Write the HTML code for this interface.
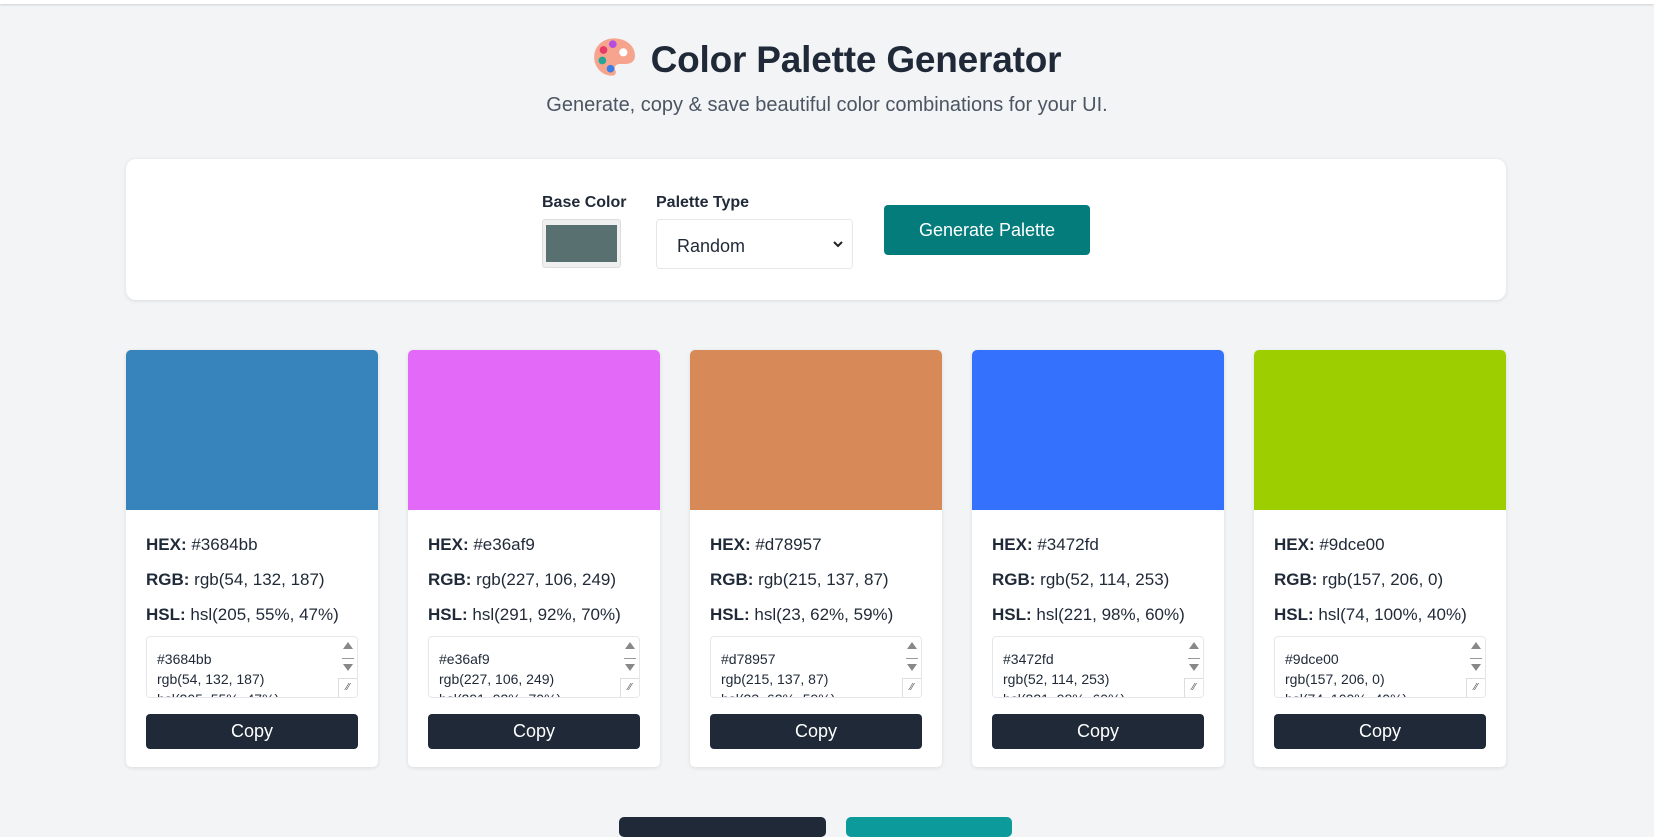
<!DOCTYPE html>
<html><head><meta charset="utf-8">
<style>
*{box-sizing:border-box;margin:0;padding:0}
body{width:1654px;height:821px;overflow:hidden;background:#f3f4f6;font-family:"Liberation Sans",sans-serif;color:#1f2937;position:relative}
.topbar{position:absolute;left:0;top:0;width:1654px;height:4px;background:#fff;box-shadow:0 1px 2px rgba(0,0,0,.15)}
h1{position:absolute;left:0;width:1654px;top:36px;text-align:center;font-size:37px;font-weight:bold;letter-spacing:-0.2px}
.sub{position:absolute;left:0;width:1654px;top:94px;text-align:center;font-size:20px;color:#4b5563}
.panel{position:absolute;left:126px;top:159px;width:1380px;height:141px;background:#fff;border-radius:10px;box-shadow:0 1px 4px rgba(0,0,0,.1)}
.lbl{position:absolute;font-size:16px;font-weight:bold;top:194px}
.cin{position:absolute;left:542px;top:219px;width:79px;height:49px;background:#efefef;border:1px solid #ddd;border-radius:3px}
.cin div{position:absolute;left:3px;top:5px;right:3px;bottom:5px;background:#587170}
.sel{position:absolute;left:656px;top:219px;width:197px;height:50px;border:1px solid #e5e7eb;border-radius:4px;background:#fff;font-size:18px;padding:16px 0 0 20px}
.gen{position:absolute;left:884px;top:205px;width:206px;height:50px;background:#047c7c;color:#fff;border-radius:4px;font-size:18px;text-align:center;line-height:50px}
.card{position:absolute;top:350px;width:252px;height:417px;background:#fff;border-radius:5px;box-shadow:0 1px 4px rgba(0,0,0,.1);overflow:hidden}
.sw{height:160px}
.info{padding:0 20px;font-size:17px}
.info p{height:35px;line-height:35px}
.info p:first-child{margin-top:17px}
.ta{position:relative;margin-top:4px;height:62px;border:1px solid #e5e7eb;border-radius:4px;font-size:14px;line-height:20px;padding:12px 0 0 10px;overflow:hidden;color:#1f2937}
.sb{position:absolute;right:0;top:0;width:18px;height:100%}
.sb .u{position:absolute;left:4px;top:5px;border-left:5px solid transparent;border-right:5px solid transparent;border-bottom:7px solid #888}
.sb .m{position:absolute;left:3px;top:21px;width:12px;height:1px;background:#999}
.sb .d{position:absolute;left:4px;top:27px;border-left:5px solid transparent;border-right:5px solid transparent;border-top:7px solid #888}
.rz{position:absolute;right:0;bottom:0;width:19px;height:19px;border-left:1px solid #ddd;border-top:1px solid #ddd;background:#fff;font-size:10px;color:#555;text-align:center;line-height:18px}
.copy{margin-top:16px;height:35px;background:#1f2937;color:#fff;border-radius:4px;text-align:center;line-height:35px;font-size:18px}
.b1{position:absolute;left:619px;top:817px;width:207px;height:20px;background:#1f2937;border-radius:5px}
.b2{position:absolute;left:846px;top:817px;width:166px;height:20px;background:#0d9a9a;border-radius:5px}
</style></head><body>
<div class="topbar"></div>
<h1><span style="display:inline-block;vertical-align:-6px;margin-right:16px"><svg width="42" height="42" viewBox="0 0 36 36"><path d="M18 2C8 2 1 9 1 18c0 9 7 16 15 16 4 0 4-3 3-5-1-3 1-5 4-5h5c5 0 8-3 8-7C36 8 28 2 18 2z" fill="#f7a48e"/><circle cx="26" cy="14" r="3.5" fill="#fff"/><circle cx="17" cy="7" r="3.3" fill="#b44de0"/><circle cx="9" cy="12" r="3.3" fill="#e83a6a"/><circle cx="8" cy="21" r="3.3" fill="#23a696"/><circle cx="15" cy="28" r="3.3" fill="#3a7de8"/></svg></span>Color Palette Generator</h1>
<div class="sub">Generate, copy &amp; save beautiful color combinations for your UI.</div>
<div class="panel"></div>
<div class="lbl" style="left:542px">Base Color</div>
<div class="lbl" style="left:656px">Palette Type</div>
<div class="cin"><div></div></div>
<div class="sel">Random<svg style="position:absolute;right:8px;top:20px" width="12" height="8" viewBox="0 0 12 8"><path d="M2 2l4 4 4-4" stroke="#222" stroke-width="2" fill="none"/></svg></div>
<div class="gen">Generate Palette</div>

<div class="card" style="left:126px"><div class="sw" style="background:#3684bb"></div><div class="info"><p><b>HEX:</b> #3684bb</p><p><b>RGB:</b> rgb(54, 132, 187)</p><p><b>HSL:</b> hsl(205, 55%, 47%)</p><div class="ta">#3684bb<br>rgb(54, 132, 187)<br>hsl(205, 55%, 47%)<div class="sb"><div class="u"></div><div class="m"></div><div class="d"></div></div><div class="rz">⁄⁄</div></div><div class="copy">Copy</div></div></div>
<div class="card" style="left:408px"><div class="sw" style="background:#e36af9"></div><div class="info"><p><b>HEX:</b> #e36af9</p><p><b>RGB:</b> rgb(227, 106, 249)</p><p><b>HSL:</b> hsl(291, 92%, 70%)</p><div class="ta">#e36af9<br>rgb(227, 106, 249)<br>hsl(291, 92%, 70%)<div class="sb"><div class="u"></div><div class="m"></div><div class="d"></div></div><div class="rz">⁄⁄</div></div><div class="copy">Copy</div></div></div>
<div class="card" style="left:690px"><div class="sw" style="background:#d78957"></div><div class="info"><p><b>HEX:</b> #d78957</p><p><b>RGB:</b> rgb(215, 137, 87)</p><p><b>HSL:</b> hsl(23, 62%, 59%)</p><div class="ta">#d78957<br>rgb(215, 137, 87)<br>hsl(23, 62%, 59%)<div class="sb"><div class="u"></div><div class="m"></div><div class="d"></div></div><div class="rz">⁄⁄</div></div><div class="copy">Copy</div></div></div>
<div class="card" style="left:972px"><div class="sw" style="background:#3472fd"></div><div class="info"><p><b>HEX:</b> #3472fd</p><p><b>RGB:</b> rgb(52, 114, 253)</p><p><b>HSL:</b> hsl(221, 98%, 60%)</p><div class="ta">#3472fd<br>rgb(52, 114, 253)<br>hsl(221, 98%, 60%)<div class="sb"><div class="u"></div><div class="m"></div><div class="d"></div></div><div class="rz">⁄⁄</div></div><div class="copy">Copy</div></div></div>
<div class="card" style="left:1254px"><div class="sw" style="background:#9dce00"></div><div class="info"><p><b>HEX:</b> #9dce00</p><p><b>RGB:</b> rgb(157, 206, 0)</p><p><b>HSL:</b> hsl(74, 100%, 40%)</p><div class="ta">#9dce00<br>rgb(157, 206, 0)<br>hsl(74, 100%, 40%)<div class="sb"><div class="u"></div><div class="m"></div><div class="d"></div></div><div class="rz">⁄⁄</div></div><div class="copy">Copy</div></div></div>

<div class="b1"></div><div class="b2"></div>
</body></html>
